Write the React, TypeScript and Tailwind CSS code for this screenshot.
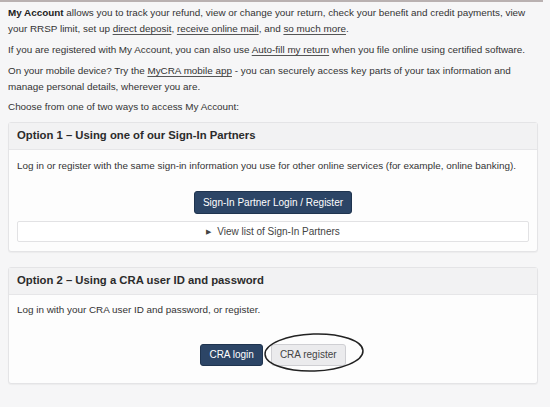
import React from 'react';

const Link: React.FC<{ children: React.ReactNode }> = ({ children }) => (
  <a href="#" className="underline decoration-[#555] underline-offset-[2px] text-[#333]">
    {children}
  </a>
);

const Panel: React.FC<{ title: string; children: React.ReactNode; bodyClass?: string }> = ({
  title,
  children,
  bodyClass = '',
}) => (
  <section className="border border-[#e4e4e6] rounded-[3px] bg-[#fdfdfd] shadow-[0_1px_1px_rgba(0,0,0,0.04)]">
    <div className="h-[27px] flex items-center px-[8px] bg-[#f2f2f3] border-b border-[#e6e6e8]">
      <h2 className="text-[11.3px] font-bold text-[#2b2b2b] leading-none">{title}</h2>
    </div>
    <div className={`px-[8px] ${bodyClass}`}>{children}</div>
  </section>
);

export default function App() {
  return (
    <div className="min-h-[407px] bg-[#f6f6f7] font-['Liberation_Sans',Arial,sans-serif] text-[9.9px] leading-[16px] text-[#333]">
      <div className="h-[2px] bg-[#b9b1b1] mr-[7px]" />
      <div className="pl-[8px] pr-[12px] pt-[3px]">
        <p className="mb-[5px] whitespace-nowrap">
          <strong className="font-bold text-[#222]">My Account</strong> allows you to track your refund, view or
          change your return, check your benefit and credit payments, view
          <br />
          your RRSP limit, set up <Link>direct deposit</Link>, <Link>receive online mail</Link>, and{' '}
          <Link>so much more</Link>.
        </p>
        <p className="mb-[5px] whitespace-nowrap">
          If you are registered with My Account, you can also use <Link>Auto-fill my return</Link> when you file
          online using certified software.
        </p>
        <p className="mb-[4px] whitespace-nowrap">
          On your mobile device? Try the <Link>MyCRA mobile app</Link> - you can securely access key parts of your tax
          information and
          <br />
          manage personal details, wherever you are.
        </p>
        <p className="mb-[7px]">Choose from one of two ways to access My Account:</p>

        <Panel title="Option 1 – Using one of our Sign-In Partners" bodyClass="pt-[8px] pb-[9px]">
          <p className="whitespace-nowrap">
            Log in or register with the same sign-in information you use for other online services (for example,
            online banking).
          </p>
          <div className="flex justify-center mt-[17px]">
            <button className="h-[23px] px-[8px] rounded-[3px] bg-[#2c4566] border border-[#1f344f] text-white text-[10px]">
              Sign-In Partner Login / Register
            </button>
          </div>
          <div className="mt-[7px] h-[21px] border border-[#e2e2e4] rounded-[2px] bg-white flex items-center justify-center gap-[6px] text-[10px] text-[#444]">
            <span className="text-[7px] leading-none">&#9654;</span>
            <span>View list of Sign-In Partners</span>
          </div>
        </Panel>

        <div className="h-[15px]" />

        <Panel title="Option 2 – Using a CRA user ID and password" bodyClass="pt-[7px] pb-[17px]">
          <p>Log in with your CRA user ID and password, or register.</p>
          <div className="flex justify-center gap-[8px] mt-[26px]">
            <button className="h-[22px] px-[8px] rounded-[3px] bg-[#2c4566] border border-[#1f344f] text-white text-[10px]">
              CRA login
            </button>
            <button className="relative h-[22px] px-[8px] rounded-[3px] bg-[#ebebed] border border-[#cfcfd3] text-[#444] text-[10px]">
              CRA register
              <svg
                className="absolute left-[-8px] top-[-12px] overflow-visible pointer-events-none"
                width="100"
                height="40"
                viewBox="0 0 100 40"
              >
                <ellipse cx="50" cy="19.5" rx="49" ry="18.5" fill="none" stroke="#222" strokeWidth="1.5" transform="rotate(-2 50 19.5)" />
              </svg>
            </button>
          </div>
        </Panel>
      </div>
    </div>
  );
}
